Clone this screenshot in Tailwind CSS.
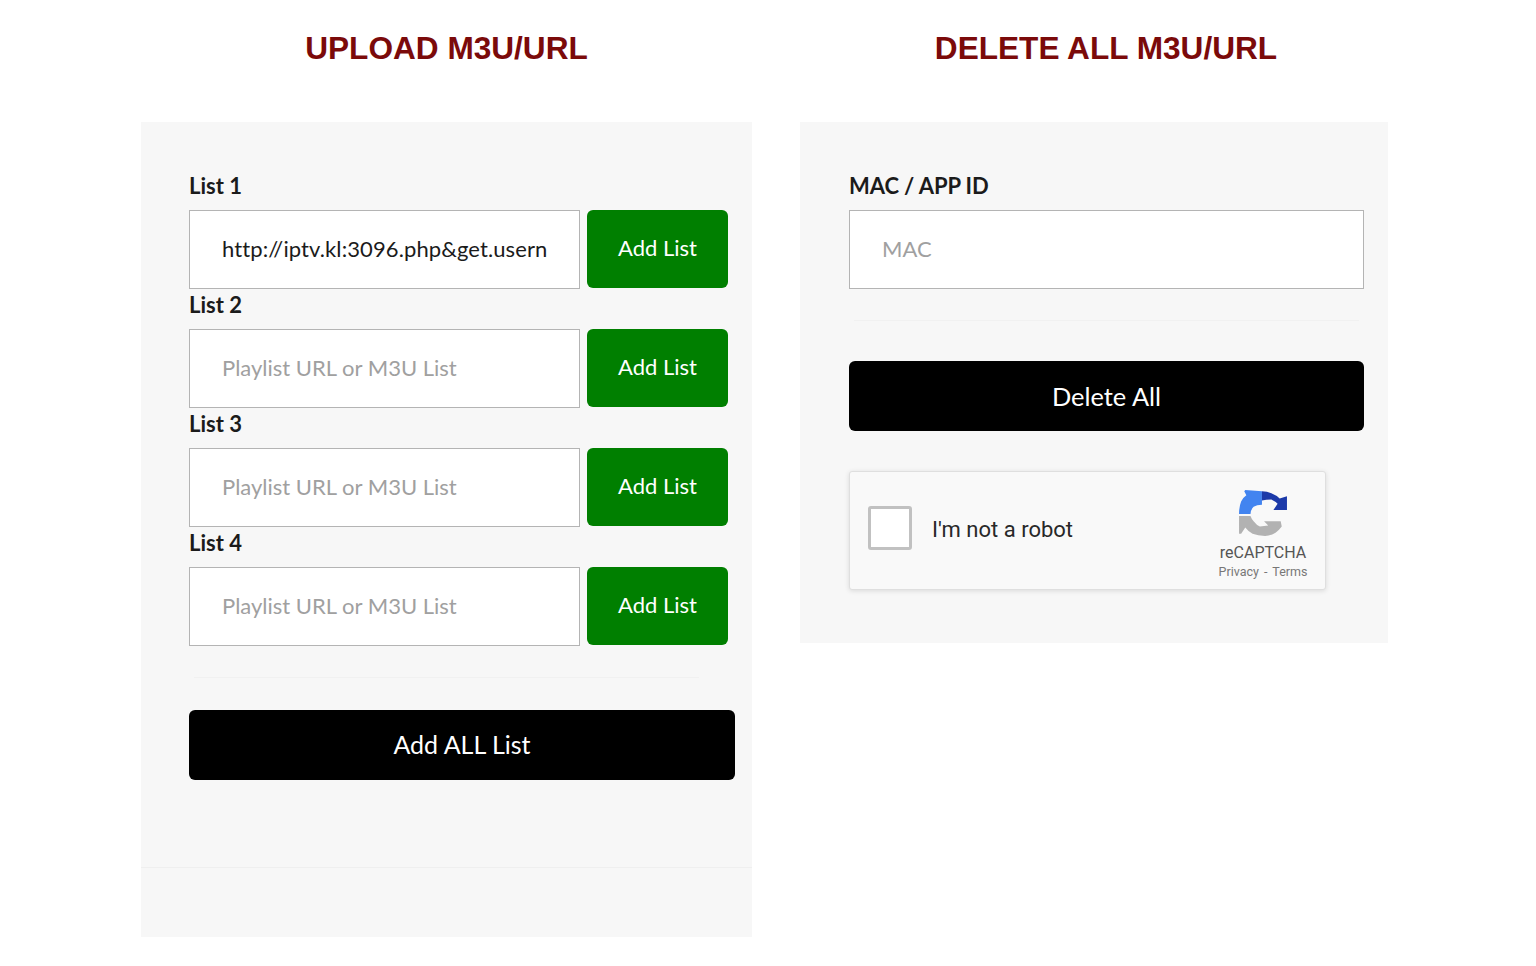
<!DOCTYPE html>
<html lang="en">
<head>
<meta charset="utf-8">
<title>M3U</title>
<script src="https://cdn.jsdelivr.net/npm/@tailwindcss/browser@4"></script>
</head>
<body class="bg-white font-['Lato','Liberation_Sans',sans-serif] text-[#1b1b1b]">
<div class="w-[1536px] h-[966px] overflow-hidden pl-[141px] flex items-start gap-[48px]">
  <section class="w-[611px]">
    <h2 class="h-[122px] pt-[29px] text-center font-['Liberation_Sans',sans-serif] font-bold text-[31.6px] leading-[38px] text-[#7b0a0a]">UPLOAD M3U/URL</h2>
    <div class="h-[815px] bg-[#f7f7f7] flex flex-col">
      <div class="h-[746px] pl-[48px] pr-[17px] pt-[50px] border-b border-[#efefef]">
        <div class="flex flex-col">
          <div class="h-[119px]">
            <label class="block h-[38px] font-bold text-[22px] leading-[27px]">List 1</label>
            <div class="flex gap-[7px]">
              <div class="w-[391px] h-[79px] bg-white border border-[#b4b4b4] pl-[32px] pb-[2px] flex items-center text-[22px] tracking-[0.1px] text-[#1b1b1b] overflow-hidden whitespace-nowrap">http://iptv.kl:3096.php&amp;get.usern</div>
              <button class="w-[141px] h-[78px] pb-[3px] bg-[#007f00] rounded-[6px] text-white text-[22px]">Add List</button>
            </div>
          </div>
          <div class="h-[119px]">
            <label class="block h-[38px] font-bold text-[22px] leading-[27px]">List 2</label>
            <div class="flex gap-[7px]">
              <div class="w-[391px] h-[79px] bg-white border border-[#b4b4b4] pl-[32px] pb-[2px] flex items-center text-[22px] text-[#a0a0a0] whitespace-nowrap">Playlist URL or M3U List</div>
              <button class="w-[141px] h-[78px] pb-[3px] bg-[#007f00] rounded-[6px] text-white text-[22px]">Add List</button>
            </div>
          </div>
          <div class="h-[119px]">
            <label class="block h-[38px] font-bold text-[22px] leading-[27px]">List 3</label>
            <div class="flex gap-[7px]">
              <div class="w-[391px] h-[79px] bg-white border border-[#b4b4b4] pl-[32px] pb-[2px] flex items-center text-[22px] text-[#a0a0a0] whitespace-nowrap">Playlist URL or M3U List</div>
              <button class="w-[141px] h-[78px] pb-[3px] bg-[#007f00] rounded-[6px] text-white text-[22px]">Add List</button>
            </div>
          </div>
          <div>
            <label class="block h-[38px] font-bold text-[22px] leading-[27px]">List 4</label>
            <div class="flex gap-[7px]">
              <div class="w-[391px] h-[79px] bg-white border border-[#b4b4b4] pl-[32px] pb-[2px] flex items-center text-[22px] text-[#a0a0a0] whitespace-nowrap">Playlist URL or M3U List</div>
              <button class="w-[141px] h-[78px] pb-[3px] bg-[#007f00] rounded-[6px] text-white text-[22px]">Add List</button>
            </div>
          </div>
        </div>
        <hr class="mt-[31px] ml-[5px] w-[505px] border-[#f1f1f1]">
        <button class="block mt-[32px] w-[546px] h-[70px] bg-black rounded-[6px] text-white text-[25px]">Add ALL List</button>
      </div>
    </div>
  </section>
  <section class="w-[588px] relative">
    <h2 class="h-[122px] pt-[29px] w-[612px] text-center font-['Liberation_Sans',sans-serif] font-bold text-[31.6px] leading-[38px] text-[#7b0a0a] whitespace-nowrap">DELETE ALL M3U/URL</h2>
    <div class="h-[521px] bg-[#f7f7f7] pl-[49px] pr-[24px] pt-[50px]">
      <label class="block h-[38px] font-bold text-[22px] leading-[27px] tracking-[-0.1px] whitespace-nowrap">MAC / APP ID</label>
      <div class="w-[515px] h-[79px] bg-white border border-[#b4b4b4] pl-[32px] pb-[2px] flex items-center text-[22px] text-[#a0a0a0]">MAC</div>
      <hr class="mt-[31px] ml-[5px] w-[505px] border-[#f1f1f1]">
      <button class="block mt-[40px] w-[515px] h-[70px] bg-black rounded-[6px] text-white text-[25.4px]">Delete All</button>
      <div class="mt-[40px] w-[477px] h-[119px] bg-[#f9f9f9] border border-[#dfdfdf] rounded-[3px] shadow-[0_1px_5px_rgba(0,0,0,0.12)] pl-[18px] pr-[16px] flex items-center font-['Roboto','Liberation_Sans',sans-serif]">
        <span class="w-[44px] h-[44px] bg-white border-[3px] border-[#c1c1c1] rounded-[3px] -mt-[6px]"></span>
        <span class="ml-[20px] text-[22px] text-[#282828] flex-1 -mt-[3px]">I'm not a robot</span>
        <div class="flex flex-col items-center w-[92px] pt-[8px]">
          <svg class="w-[50px] h-[48px]" viewBox="6 5 48 46" aria-hidden="true">
            <path fill="#4284f0" d="M13 6 L29 7 V20 Q24 20 21 22 Q18 25 18 29 H7 Q7 22 9 17 Q11 13 14 11 L12 7 Z"/>
            <path fill="#1c3aa9" d="M29 7 Q34 7 38 9 Q43 11 46 14 L53 12 V25 H40 L44 19 Q42 17 38 15 Q33 15 29 16 Z"/>
            <path fill="#b2b2b2" d="M7 31 H18 Q19 34 21 36 Q24 40 27 41 L35 40 L31 36 H47 L48 41 Q45 45 42 47 Q37 50 32 50 Q25 50 20 48 Q16 46 13 42 L9 48 H7 Z"/>
          </svg>
          <span class="mt-[6px] text-[16px] leading-[20px] text-[#555] whitespace-nowrap">reCAPTCHA</span>
          <span class="mt-[1px] text-[12.5px] leading-[16px] text-[#777] whitespace-nowrap">Privacy <span class="mx-[2px]">-</span> Terms</span>
        </div>
      </div>
    </div>
  </section>
</div>
</body>
</html>
